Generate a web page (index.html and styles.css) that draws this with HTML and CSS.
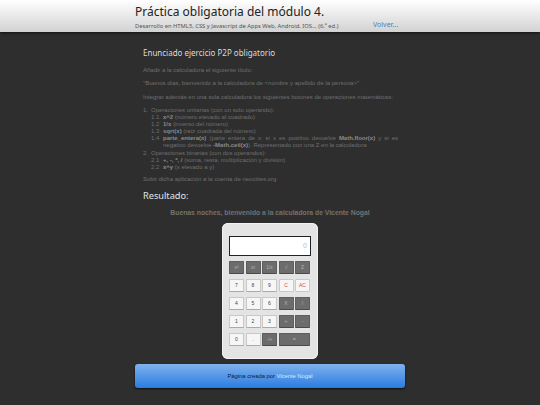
FILE: index.html
```html
<!DOCTYPE html>
<html lang="es">
<head>
    <meta charset="UTF-8">
    <title>Práctica obligatoria del módulo 4.</title>
    <link rel="stylesheet" href="styles.css">
</head>
<body>

<header class="top-bar">
    <div class="wrap top-inner">
        <h1>Práctica obligatoria del módulo 4.</h1>
        <div class="sub-row">
            <span class="subtitle">Desarrollo en HTML5, CSS y Javascript de Apps Web, Android, IOS... (6.ª ed.)</span>
            <a class="back-link" href="#">Volver...</a>
        </div>
    </div>
</header>

<main class="wrap content">
    <h2>Enunciado ejercicio P2P obligatorio</h2>
    <p>Añadir a la calculadora el siguiente título:</p>
    <p>"Buenos días, bienvenido a la calculadora de &lt;nombre y apellido de la persona&gt;"</p>
    <p>Integrar además en una sola calculadora los siguientes botones de operaciones matemáticas:</p>

    <div class="op-group">
        <div class="op-title"><span class="num">1.</span>Operaciones unitarias (con un solo operando):</div>
        <div class="op"><span class="num">1.1</span><span><b>x^2</b> (número elevado al cuadrado)</span></div>
        <div class="op"><span class="num">1.2</span><span><b>1/x</b> (inverso del número)</span></div>
        <div class="op"><span class="num">1.3</span><span><b>sqrt(x)</b> (raíz cuadrada del número)</span></div>
        <div class="op"><span class="num">1.4</span><span class="just"><b>parte_entera(x)</b> (parte entera de x: si x es positivo devuelve <b>Math.floor(x)</b> y si es negativo devuelve <b>-Math.ceil(x)</b>). Representado con una Z en la calculadora</span></div>
    </div>

    <div class="op-group last">
        <div class="op-title"><span class="num">2.</span>Operaciones binarias (con dos operandos):</div>
        <div class="op"><span class="num">2.1</span><span><b>+, -, *, /</b> (suma, resta, multiplicación y división)</span></div>
        <div class="op"><span class="num">2.2</span><span><b>x^y</b> (x elevado a y)</span></div>
    </div>

    <p>Subir dicha aplicación a la cuenta de neocities.org</p>

    <h2 class="result-title">Resultado:</h2>
    <div class="greeting">Buenas noches, bienvenido a la calculadora de Vicente Nogal</div>

    <div class="calc">
        <div class="screen">0</div>
        <div class="keys">
            <button class="dark">x²</button>
            <button class="dark">xʸ</button>
            <button class="dark">1/x</button>
            <button class="dark">√</button>
            <button class="dark">Z</button>
        </div>
        <div class="keys">
            <button>7</button>
            <button>8</button>
            <button>9</button>
            <button class="red">C</button>
            <button class="red">AC</button>
        </div>
        <div class="keys">
            <button>4</button>
            <button>5</button>
            <button>6</button>
            <button class="dark">X</button>
            <button class="dark">/</button>
        </div>
        <div class="keys">
            <button>1</button>
            <button>2</button>
            <button>3</button>
            <button class="dark">+</button>
            <button class="dark">-</button>
        </div>
        <div class="keys">
            <button>0</button>
            <button>.</button>
            <button class="dark">-/+</button>
            <button class="dark wide">=</button>
        </div>
    </div>

    <footer class="credit">Página creada por <a href="#">Vicente Nogal</a></footer>
</main>

</body>
</html>
```

FILE: styles.css
```css
/* Page */
html, body {
    margin: 0;
    height: 100%;
}

body {
    background-color: #2e2e2e;
    font-family: 'Liberation Sans', Arial, sans-serif;
    overflow: hidden;
}

.wrap {
    width: 270px;
    margin: 0 auto;
}

/* Header */
.top-bar {
    height: 32px;
    background: linear-gradient(#ffffff, #d2d2d2);
    box-shadow: 0 1px 3px rgba(0, 0, 0, 0.6);
}

.top-inner {
    padding-top: 4px;
}

h1 {
    margin: 0;
    font-family: 'Noto Sans', sans-serif;
    font-size: 12px;
    line-height: 16px;
    font-weight: 400;
    color: #222;
}

.sub-row {
    display: flex;
    align-items: center;
}

.subtitle {
    flex: none;
    width: 238px;
    font-family: 'Noto Sans', sans-serif;
    font-size: 5.8px;
    white-space: nowrap;
    color: #555;
}

.back-link {
    margin-bottom: 2px;
    font-family: 'Noto Sans', sans-serif;
    font-size: 7px;
    color: #4a7fc0;
    text-decoration: none;
}

/* Statement */
.content {
    padding-top: 15px;
    color: #6f6f6f;
    font-size: 6px;
    line-height: 7px;
}

.content > p {
    margin: 0 8px 6.3px;
}

h2 {
    margin: 0 0 8px 8px;
    font-family: 'Noto Sans', sans-serif;
    font-size: 8px;
    line-height: 12px;
    font-weight: 400;
    color: #dcdcdc;
}

.op-group {
    margin: 0 7px 1.6px 8px;
}

.op-group.last {
    margin-bottom: 4.4px;
}

.op-title {
    display: flex;
}

.op-title .num {
    width: 8px;
}

.op {
    display: flex;
    margin-left: 8px;
}

.op .num {
    width: 12px;
    flex: none;
}

.just {
    text-align: justify;
}

.content b {
    color: #8a8a8a;
}

.content .result-title {
    margin: 7px 0 7px 8px;
    font-size: 9.2px;
    color: #e4e4e4;
}

.greeting {
    text-align: center;
    font-size: 6.8px;
    font-weight: bold;
    color: #727272;
    line-height: 8px;
    margin-bottom: 6px;
}

/* Calculator */
.calc {
    box-sizing: border-box;
    width: 96px;
    height: 136px;
    margin: 0 auto;
    padding: 13px 7px 0;
    background-color: #e4e4e4;
    border-radius: 6px;
    box-shadow: inset 0 0 0 1px #f2f2f2;
}

.screen {
    box-sizing: border-box;
    height: 20px;
    margin-bottom: 5px;
    padding: 0 3px;
    background-color: #fff;
    border: 1px solid #222;
    color: #bbb;
    font-size: 7px;
    line-height: 18px;
    text-align: right;
}

.keys {
    display: grid;
    grid-template-columns: repeat(5, 15px);
    column-gap: 1.5px;
    margin-bottom: 5px;
}

.keys button {
    height: 13px;
    padding: 0;
    background-color: #f6f6f6;
    border: 1px solid #c8c8c8;
    border-bottom-color: #aaa;
    border-radius: 1px;
    color: #444;
    font-family: 'Liberation Sans', Arial, sans-serif;
    font-size: 5px;
}

.keys .dark {
    background-color: #6c6c6c;
    border-color: #5e5e5e;
    border-bottom-color: #4a4a4a;
    color: #b5b5b5;
}

.keys .red {
    color: #e04a4a;
    border-color: #d8c4c4;
}

.keys .wide {
    grid-column: span 2;
}

/* Footer */
.credit {
    height: 24px;
    margin-top: 5px;
    background: linear-gradient(#7fb2ee, #2a7ce0);
    border-radius: 3px;
    box-shadow: 0 1px 2px rgba(0, 0, 0, 0.7);
    color: #0c2038;
    font-size: 5.8px;
    line-height: 24px;
    text-align: center;
}

.credit a {
    color: #d8e8fb;
    text-decoration: none;
}
```
